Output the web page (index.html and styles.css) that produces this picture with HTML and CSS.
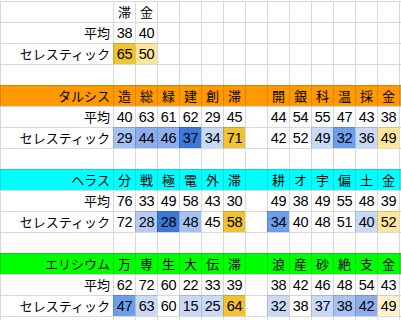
FILE: index.html
```html
<!DOCTYPE html>
<html lang="ja">
<head>
<meta charset="utf-8">
<link rel="stylesheet" href="styles.css">
</head>
<body>
<div class="sheet">
  <div class="row"><div class="lbl"></div><div class="hd">滞</div><div class="hd">金</div><div></div><div></div><div></div><div></div><div></div><div></div><div></div><div></div><div></div><div></div><div></div><div></div></div>
  <div class="row"><div class="lbl">平均</div><div class="n">38</div><div class="n">40</div><div></div><div></div><div></div><div></div><div></div><div></div><div></div><div></div><div></div><div></div><div></div><div></div></div>
  <div class="row"><div class="lbl">セレスティック</div><div class="n gd">65</div><div class="n yl">50</div><div></div><div></div><div></div><div></div><div></div><div></div><div></div><div></div><div></div><div></div><div></div><div></div></div>
  <div class="row"><div class="lbl"></div><div></div><div></div><div></div><div></div><div></div><div></div><div></div><div></div><div></div><div></div><div></div><div></div><div></div><div></div></div>

  <div class="row orange"><div class="lbl">タルシス</div><div class="hd">造</div><div class="hd">総</div><div class="hd">緑</div><div class="hd">建</div><div class="hd">創</div><div class="hd">滞</div><div></div><div class="hd">開</div><div class="hd">銀</div><div class="hd">科</div><div class="hd">温</div><div class="hd">採</div><div class="hd">金</div><div></div></div>
  <div class="row"><div class="lbl">平均</div><div class="n">40</div><div class="n">63</div><div class="n">61</div><div class="n">62</div><div class="n">29</div><div class="n">45</div><div></div><div class="n">44</div><div class="n">54</div><div class="n">55</div><div class="n">47</div><div class="n">43</div><div class="n">38</div><div></div></div>
  <div class="row"><div class="lbl">セレスティック</div><div class="n b2">29</div><div class="n b25">44</div><div class="n b25">46</div><div class="n b4">37</div><div class="n b1">34</div><div class="n gd">71</div><div></div><div class="n">42</div><div class="n">52</div><div class="n b1">49</div><div class="n b3">32</div><div class="n b1">36</div><div class="n yl">49</div><div></div></div>
  <div class="row"><div class="lbl"></div><div></div><div></div><div></div><div></div><div></div><div></div><div></div><div></div><div></div><div></div><div></div><div></div><div></div><div></div></div>

  <div class="row cyan"><div class="lbl">ヘラス</div><div class="hd">分</div><div class="hd">戦</div><div class="hd">極</div><div class="hd">電</div><div class="hd">外</div><div class="hd">滞</div><div></div><div class="hd">耕</div><div class="hd">オ</div><div class="hd">宇</div><div class="hd">偏</div><div class="hd">土</div><div class="hd">金</div><div></div></div>
  <div class="row"><div class="lbl">平均</div><div class="n">76</div><div class="n">33</div><div class="n">49</div><div class="n">58</div><div class="n">43</div><div class="n">30</div><div></div><div class="n">49</div><div class="n">38</div><div class="n">49</div><div class="n">55</div><div class="n">48</div><div class="n">39</div><div></div></div>
  <div class="row"><div class="lbl">セレスティック</div><div class="n">72</div><div class="n b15">28</div><div class="n b4">28</div><div class="n b2">48</div><div class="n">45</div><div class="n gd">58</div><div></div><div class="n b3">34</div><div class="n">40</div><div class="n">48</div><div class="n">51</div><div class="n b1">40</div><div class="n yl">52</div><div></div></div>
  <div class="row"><div class="lbl"></div><div></div><div></div><div></div><div></div><div></div><div></div><div></div><div></div><div></div><div></div><div></div><div></div><div></div><div></div></div>

  <div class="row green"><div class="lbl">エリシウム</div><div class="hd">万</div><div class="hd">専</div><div class="hd">生</div><div class="hd">大</div><div class="hd">伝</div><div class="hd">滞</div><div></div><div class="hd">浪</div><div class="hd">産</div><div class="hd">砂</div><div class="hd">絶</div><div class="hd">支</div><div class="hd">金</div><div></div></div>
  <div class="row"><div class="lbl">平均</div><div class="n">62</div><div class="n">72</div><div class="n">60</div><div class="n">22</div><div class="n">33</div><div class="n">39</div><div></div><div class="n">38</div><div class="n">42</div><div class="n">46</div><div class="n">48</div><div class="n">54</div><div class="n">43</div><div></div></div>
  <div class="row"><div class="lbl">セレスティック</div><div class="n b3">47</div><div class="n b1">63</div><div class="n">60</div><div class="n b1">15</div><div class="n b1">25</div><div class="n gd">64</div><div></div><div class="n b1">32</div><div class="n">38</div><div class="n b1">37</div><div class="n b2">38</div><div class="n b25">42</div><div class="n cr">49</div><div></div></div>
  <div class="row last"><div class="lbl"></div><div></div><div></div><div></div><div></div><div></div><div></div><div></div><div></div><div></div><div></div><div></div><div></div><div></div><div></div></div>
</div>
</body>
</html>
```

FILE: styles.css
```css
html, body {
  margin: 0;
  padding: 0;
  background: #ffffff;
  overflow: hidden;
}
body {
  width: 401px;
  height: 320px;
  font-family: "Liberation Sans", "Noto Sans CJK JP", sans-serif;
  color: #000;
}
.sheet {
  box-sizing: border-box;
  width: 401px;
  height: 320px;
  padding-top: 1px;
  overflow: hidden;
}
.row {
  display: grid;
  grid-template-columns: 113px repeat(13, 22px) 2px;
  height: 21px;
}
.row.last {
  height: 4px;
}
.row > div {
  box-sizing: border-box;
  border-top: 1px solid rgba(0, 0, 0, 0.15);
  border-left: 1px solid rgba(0, 0, 0, 0.15);
  height: 21px;
  line-height: 20px;
  white-space: nowrap;
  overflow: hidden;
}
.row.last > div {
  height: 4px;
}
.lbl {
  font-family: "Noto Sans CJK JP", sans-serif;
  font-size: 13px;
  text-align: right;
  padding-right: 3px;
}
.hd {
  font-family: "Noto Sans CJK JP", sans-serif;
  font-size: 13px;
  text-align: center;
}
.n {
  font-size: 14.5px;
  text-align: center;
  letter-spacing: -0.2px;
}
.orange { background: #ff9900; }
.cyan { background: #00ffff; }
.green { background: #00ff00; }

.gd { background: #f1c232; }
.yl { background: #ffe599; }
.cr { background: #fff2cc; }
.b1 { background: #c9daf8; }
.b15 { background: #b4cbf5; }
.b2 { background: #a6c2f3; }
.b25 { background: #8caeee; }
.b3 { background: #6d9eeb; }
.b4 { background: #3c78d8; }
```
